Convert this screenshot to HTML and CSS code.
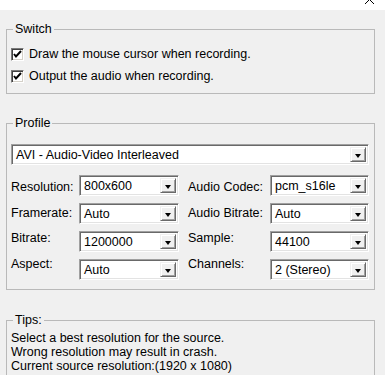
FILE: index.html
```html
<!DOCTYPE html>
<html lang="en">

<head>
  <meta charset="UTF-8">
  <title>Record Settings</title>
  <link rel="stylesheet" href="styles.css">
</head>

<body>
  <div class="titlebar">
    <svg class="close-icon" width="10" height="10" viewBox="0 0 10 10">
      <path d="M0 -5 L9 4 M9 -5 L0 4" stroke="#000" stroke-width="1" fill="none" />
    </svg>
  </div>

  <div class="dialog">
    <fieldset class="group group-switch">
      <legend>Switch</legend>
      <label class="check-row">
        <span class="checkbox"><svg width="9" height="9" viewBox="0 0 9 9"><path d="M1 4 L3 6.5 L8 1" stroke="#000" stroke-width="2" fill="none" /></svg></span>
        Draw the mouse cursor when recording.
      </label>
      <label class="check-row">
        <span class="checkbox"><svg width="9" height="9" viewBox="0 0 9 9"><path d="M1 4 L3 6.5 L8 1" stroke="#000" stroke-width="2" fill="none" /></svg></span>
        Output the audio when recording.
      </label>
    </fieldset>

    <fieldset class="group group-profile">
      <legend>Profile</legend>
      <div class="combo combo-wide">
        <span class="combo-text">AVI - Audio-Video Interleaved</span>
        <span class="combo-btn"></span>
      </div>

      <div class="profile-grid">
        <div class="field-label r1">Resolution:</div>
        <div class="combo"><span class="combo-text">800x600</span><span class="combo-btn"></span></div>
        <div class="field-label r1">Audio Codec:</div>
        <div class="combo"><span class="combo-text">pcm_s16le</span><span class="combo-btn"></span></div>

        <div class="field-label r2">Framerate:</div>
        <div class="combo"><span class="combo-text">Auto</span><span class="combo-btn"></span></div>
        <div class="field-label r2">Audio Bitrate:</div>
        <div class="combo"><span class="combo-text">Auto</span><span class="combo-btn"></span></div>

        <div class="field-label r3">Bitrate:</div>
        <div class="combo"><span class="combo-text">1200000</span><span class="combo-btn"></span></div>
        <div class="field-label r3">Sample:</div>
        <div class="combo"><span class="combo-text">44100</span><span class="combo-btn"></span></div>

        <div class="field-label r4">Aspect:</div>
        <div class="combo"><span class="combo-text">Auto</span><span class="combo-btn"></span></div>
        <div class="field-label r4">Channels:</div>
        <div class="combo"><span class="combo-text">2 (Stereo)</span><span class="combo-btn"></span></div>
      </div>
    </fieldset>

    <fieldset class="group group-tips">
      <legend>Tips:</legend>
      <p class="tips-text">
        Select a best resolution for the source.<br>
        Wrong resolution may result in crash.<br>
        Current source resolution:(1920 x 1080)
      </p>
    </fieldset>
  </div>
</body>

</html>
```

FILE: styles.css
```css
html,
body {
  margin: 0;
  height: 100%;
  overflow: hidden;
}

body {
  background-color: #f0f0f0;
  color: #000;
  font-family: "Liberation Sans", Arial, sans-serif;
  font-size: 12.5px;
}

.titlebar {
  position: relative;
  height: 10px;
  background-color: #fff;
}

.close-icon {
  position: absolute;
  top: 0;
  left: 365px;
}

.dialog {
  padding: 0 10px 0 6px;
}

.group {
  margin: 0;
  min-width: 0;
  border: 1px solid #b9b9b9;
  padding: 0 5px 0 4px;
}

.group legend {
  margin-left: 2px;
  padding: 0 2px;
  line-height: 14px;
}

.group-switch {
  margin-top: 12px;
  padding-top: 7px;
  padding-bottom: 6px;
}

.check-row {
  display: flex;
  align-items: center;
  gap: 5px;
  height: 22px;
}

.checkbox {
  display: flex;
  align-items: center;
  justify-content: center;
  box-sizing: border-box;
  width: 13px;
  height: 13px;
  background-color: #fff;
  border: 1px solid;
  border-color: #7a7a7a #fff #fff #7a7a7a;
  box-shadow: inset 1px 1px 0 #404040, inset -1px -1px 0 #d4d0c8;
}

.group-profile {
  margin-top: 22px;
  padding-top: 14px;
  padding-bottom: 9px;
}

.combo {
  display: flex;
  align-items: center;
  box-sizing: border-box;
  height: 21px;
  background-color: #fff;
  border: 1px solid;
  border-color: #a0a0a0 #fff #fff #a0a0a0;
  box-shadow: inset 1px 1px 0 #696969, inset -1px -1px 0 #e3e3e3;
  padding: 2px;
}

.combo-text {
  flex: 1;
  padding-left: 2px;
  white-space: nowrap;
  overflow: hidden;
}

.combo-btn {
  position: relative;
  box-sizing: border-box;
  width: 16px;
  height: 100%;
  background-color: #f0f0f0;
  border: 1px solid;
  border-color: #f0f0f0 #696969 #696969 #f0f0f0;
  box-shadow: inset 1px 1px 0 #fff, inset -1px -1px 0 #a0a0a0;
}

.combo-btn::after {
  content: "";
  position: absolute;
  left: 3.5px;
  top: 6px;
  border-left: 3.5px solid transparent;
  border-right: 3.5px solid transparent;
  border-top: 4px solid #000;
}

.profile-grid {
  display: grid;
  grid-template-columns: 68px 109px 82px 99px;
  grid-auto-rows: 21px;
  row-gap: 7px;
  margin-top: 10px;
  align-items: start;
}

.profile-grid .combo:nth-child(4n+2) {
  width: 100px;
}

.field-label {
  line-height: 14px;
  white-space: nowrap;
}

.field-label.r1 {
  margin-top: 5px;
}

.field-label.r2 {
  margin-top: 3px;
}

.field-label.r3 {
  margin-top: 0;
}

.field-label.r4 {
  margin-top: -2px;
}

.group-tips {
  margin-top: 23px;
  padding-top: 4px;
  padding-bottom: 40px;
}

.tips-text {
  margin: 0;
  line-height: 14px;
}
```
